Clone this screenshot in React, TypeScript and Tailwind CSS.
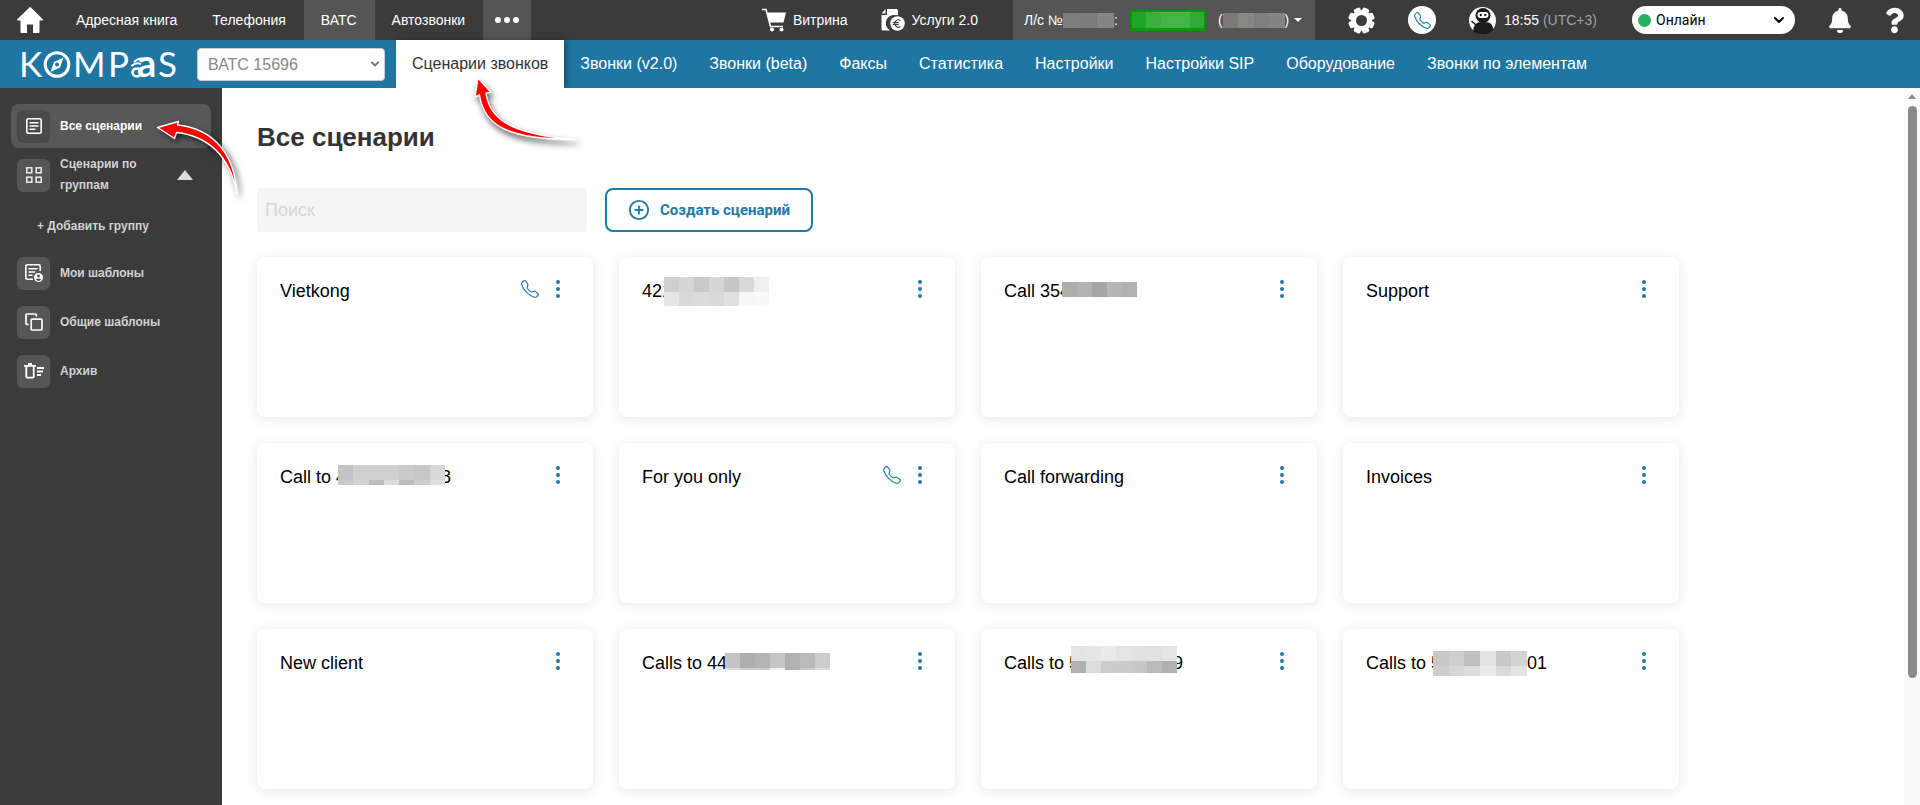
import { useState } from "react";
import type { ReactNode } from "react";
import { BsTelephone } from "react-icons/bs";
import { FaBell, FaQuestion } from "react-icons/fa";
import { ChevronDown, CirclePlus } from "lucide-react";

type MosaicRow = { height: number; colors: string[] }

type Scenario = {
    title: string;
    suffix?: string;
    phone?: boolean;
    mosaic?: MosaicRow[];
    mosaicClass?: string;
    suffixClass?: string;
}

const topLinks = ["Адресная книга", "Телефония", "ВАТС", "Автозвонки"]

const tabs = [
    "Сценарии звонков",
    "Звонки (v2.0)",
    "Звонки (beta)",
    "Факсы",
    "Статистика",
    "Настройки",
    "Настройки SIP",
    "Оборудование",
    "Звонки по элементам",
]

const scenarios: Scenario[] = [
    { title: "Vietkong", phone: true },
    {
        title: "421",
        mosaicClass: "w-[105px] -ml-2",
        mosaic: [
            { height: 15, colors: ["#cfcfcf", "#d6d6d6", "#c9c9c9", "#d6d6d6", "#c6c6c6", "#d9d9d9", "#f0f0f0"] },
            { height: 14, colors: ["#e6e6e6", "#d9d9d9", "#dbdbdb", "#d9d9d9", "#e0e0e0", "#f7f7f7", "#f9f9f9"] },
        ],
    },
    {
        title: "Call 354",
        mosaicClass: "w-[75px] -ml-2 mb-1",
        mosaic: [{ height: 15, colors: ["#adadad", "#b3b3b3", "#a6a6a6", "#b6b6b6", "#b0b0b0"] }],
    },
    { title: "Support" },
    {
        title: "Call to 4",
        suffix: "8",
        mosaicClass: "w-[107px] -ml-2 mb-1",
        suffixClass: "-ml-1",
        mosaic: [
            { height: 15, colors: ["#c3c3c3", "#d0d0d0", "#d0d0d0", "#d0d0d0", "#cacaca", "#c7c7c7", "#d8d8d8"] },
            { height: 5, colors: ["#cacaca", "#d3d3d3", "#bdbdbd", "#dcdcdc", "#bdbdbd", "#cdcdcd", "#dfdfdf"] },
        ],
    },
    { title: "For you only", phone: true },
    { title: "Call forwarding" },
    { title: "Invoices" },
    { title: "New client" },
    {
        title: "Calls to 44",
        mosaicClass: "w-[105px] -ml-[2px] mb-1",
        mosaic: [
            { height: 15, colors: ["#c4c4c4", "#aeaeae", "#b4b4b4", "#c6c6c6", "#b0b0b0", "#bababa", "#cdcdcd"] },
            { height: 2, colors: ["#dddddd", "#cccccc", "#cccccc", "#f3f3f3", "#b0b0b0", "#cccccc", "#dddddd"] },
        ],
    },
    {
        title: "Calls to 5",
        suffix: "9",
        mosaicClass: "w-[106px] -ml-2 mb-2",
        suffixClass: "-ml-1",
        mosaic: [
            { height: 15, colors: ["#e4e4e4", "#e6e6e6", "#eaeaea", "#e4e4e4", "#e2e2e2", "#e1e1e1", "#e5e5e5"] },
            { height: 12, colors: ["#b0b0b0", "#dcdcdc", "#cccccc", "#cbcbcb", "#c6c6c6", "#bababa", "#b0b0b0"] },
        ],
    },
    {
        title: "Calls to 5",
        suffix: "01",
        mosaicClass: "w-[94px] -ml-2",
        mosaic: [
            { height: 15, colors: ["#c8c8c8", "#cecece", "#c0c0c0", "#e3e3e3", "#c8c8c8", "#d3d3d3"] },
            { height: 10, colors: ["#cecece", "#d6d6d6", "#dedede", "#ececec", "#dadada", "#e3e3e3"] },
        ],
    },
]

const Mosaic = ({ rows, className = "" }: { rows: MosaicRow[]; className?: string }) => (
    <span className={`relative z-10 inline-flex flex-col shrink-0 ${className}`} aria-hidden="true">
        {rows.map((row, i) => (
            <span key={i} className="flex">
                {row.colors.map((color, j) => (
                    <span key={j} className="flex-1" style={{ background: color, height: row.height }} />
                ))}
            </span>
        ))}
    </span>
)

const HomeIcon = () => (
    <svg className="w-[26px] h-[26px]" viewBox="0 0 26 26" fill="#fff">
        <path d="M13 0 L0 12.500 Q-.3 13.500 1 13.500 H3.500 V25 Q3.500 26 4.500 26 H10 V17.500 H16 V26 H21.500 Q22.500 26 22.500 25 V13.500 H25 Q26.300 13.500 26 12.500 L14 .6 Q13 -.2 12 .6 Z" />
    </svg>
)

const CartIcon = () => (
    <svg className="w-6 h-6" viewBox="0 0 24 24" fill="none">
        <path d="M0 1.500 H4 L8.500 18.500 H21" stroke="#fff" strokeWidth="1.500" />
        <path d="M5 4.500 H24 L21.500 14.500 H7.500 Z" fill="#fff" />
        <circle cx="10" cy="21.500" r="2" fill="#fff" />
        <circle cx="19.500" cy="21.500" r="2" fill="#fff" />
    </svg>
)

const BillIcon = () => (
    <svg className="w-6 h-6" viewBox="0 0 24 24">
        <path d="M6 1 H15.500 Q17 1 17 2.500 V8 A8 8 0 0 0 9 22.500 H2 Q.5 22.500 .5 21 V7 H6 Z" fill="#fff" />
        <path d="M4.500 1 V5.500 H.5 Z" fill="#fff" />
        <circle cx="16.500" cy="15.500" r="8.300" fill="#3b3b3b" />
        <circle cx="16.500" cy="15.500" r="7.300" fill="#fff" />
        <path d="M19.500 12.500 A3.600 3.600 0 1 0 19.500 18.500 M11.800 14.600 h6 M11.800 16.500 h6" fill="none" stroke="#3b3b3b" strokeWidth="1.100" />
    </svg>
)

const GearIcon = () => (
    <svg className="w-[27px] h-[27px]" viewBox="-13.500 -13.500 27 27">
        {[0, 45, 90, 135].map((angle) => (
            <rect key={angle} x="-3.500" y="-13.200" width="7" height="26.400" rx="2" fill="#fff" transform={`rotate(${angle + 22.5})`} />
        ))}
        <circle r="10.300" fill="#fff" />
        <circle r="5.500" fill="#3b3b3b" />
    </svg>
)

const NinjaIcon = () => (
    <svg className="w-[27px] h-[27px]" viewBox="0 0 27 27">
        <circle cx="13.500" cy="13.500" r="13.500" fill="#fff" />
        <circle cx="14" cy="8.500" r="7.500" fill="#1b1b1b" />
        <rect x="8.500" y="5" width="11" height="6" rx="3" fill="#fff" />
        <circle cx="11.800" cy="8" r="1.200" fill="#1b1b1b" />
        <circle cx="16.200" cy="8" r="1.200" fill="#1b1b1b" />
        <path d="M2.500 14 L8 19 M10 16 H18.500 Q23 17 23.500 22.500 A13.500 13.500 0 0 1 5 24 Q5 18 10 16 Z" fill="#1b1b1b" stroke="#1b1b1b" strokeWidth="1.500" />
    </svg>
)

const Logo = () => (
    <svg className="w-[162px] h-12" viewBox="-1 0 162 48" role="img" aria-label="KOMPaS" fontFamily="Lato, sans-serif" fill="#fff">
        <text x="-1" y="37" fontSize="35">K</text>
        <circle cx="37" cy="24.500" r="11.800" fill="none" stroke="#fff" strokeWidth="3" />
        <path d="M43.500 17.500 L40 27.500 L30.500 32 L34 22 Z M37 22.600 a2 2 0 1 0 .1 0 Z" fillRule="evenodd" />
        <text x="53" y="37" fontSize="35">M</text>
        <text x="88" y="37" fontSize="35">P</text>
        <path d="M114 22 Q119 17 125 19 M111.500 26 Q116 22 121 24" fill="none" stroke="#fff" strokeWidth="2" />
        <path d="M122 29 Q112 27 112.500 33 Q114 38 120 35.500" fill="none" stroke="#fff" strokeWidth="2.500" />
        <text x="117" y="37" fontSize="38" fontWeight="700">a</text>
        <text x="138" y="37" fontSize="35">S</text>
    </svg>
)

const ListIcon = () => (
    <svg className="w-4 h-4" viewBox="0 0 16 16" fill="none" stroke="#fff" strokeWidth="1.600">
        <rect x=".8" y=".8" width="14.400" height="14.400" rx="1.500" />
        <path d="M3.500 4.700 H12.500 M3.500 8 H12.500 M3.500 11.300 H9.500" />
    </svg>
)

const GridIcon = () => (
    <svg className="w-4 h-4" viewBox="0 0 16 16" fill="none" stroke="#e5e5e5" strokeWidth="1.600">
        <rect x=".8" y=".8" width="5" height="5" />
        <rect x="10.200" y=".8" width="5" height="5" />
        <rect x=".8" y="10.200" width="5" height="5" />
        <rect x="10.200" y="10.200" width="5" height="5" />
    </svg>
)

const MyTemplatesIcon = () => (
    <svg className="w-[18px] h-[18px]" viewBox="0 0 18 18" fill="none" stroke="#fff" strokeWidth="1.600">
        <path d="M8 15.200 H2.300 Q.8 15.200 .8 13.700 V2.300 Q.8 .8 2.300 .8 H13.700 Q15.200 .8 15.200 2.300 V7" />
        <path d="M3.500 4.700 H12.500 M3.500 8 H10 M3.500 11.300 H7.500" />
        <circle cx="13.500" cy="13.500" r="4.500" fill="#fff" stroke="none" />
        <circle cx="13.500" cy="12" r="1.400" fill="#4f4f4f" stroke="none" />
        <path d="M10.800 15.800 Q13.500 13.400 16.200 15.800 Q13.500 18 10.800 15.800 Z" fill="#4f4f4f" stroke="none" />
    </svg>
)

const SharedIcon = () => (
    <svg className="w-[18px] h-[18px]" viewBox="0 0 18 18" fill="none" stroke="#fff" strokeWidth="1.700">
        <rect x="6.200" y="6.200" width="10.800" height="10.800" rx="1" />
        <path d="M3.500 11.300 H2 Q1 11.300 1 10.300 V2 Q1 1 2 1 H10.300 Q11.300 1 11.300 2 V3.500" />
    </svg>
)

const ArchiveIcon = () => (
    <svg className="w-5 h-4" viewBox="0 0 20 16" fill="none" stroke="#fff" strokeWidth="1.800">
        <path d="M0 2.800 H12 M4 1 H8 M2.300 3 V13.500 Q2.300 14.600 3.300 14.600 H8.700 Q9.700 14.600 9.700 13.500 V3 M13 5 H20 M13 8.500 H19 M13 12 H17" />
    </svg>
)

const SideItem = ({ icon, label, active, children }: { icon: ReactNode; label: string; active?: boolean; children?: ReactNode }) => (
    <a
        href="#"
        className={`flex items-center mx-[11px] pl-[6px] pr-[18px] h-11 rounded-lg text-xs leading-[21px] font-bold ${active ? "bg-[#585858] text-white" : "text-[#d2d2d2]"}`}
    >
        <span className={`flex items-center justify-center shrink-0 w-[33px] h-[33px] rounded-md mr-[10px] ${active ? "bg-[#4a4a4a]" : "bg-[#565656]"}`}>{icon}</span>
        <span className="w-[106px]">{label}</span>
        {children}
    </a>
)

const ScenarioCard = ({ scenario }: { scenario: Scenario }) => (
    <article className="flex items-start justify-between h-40 pl-[23px] pr-[31px] pt-5 rounded-lg bg-white shadow-[0_2px_12px_rgba(70,80,90,0.13)]">
        <h2 className="flex items-center h-7 text-lg text-black whitespace-nowrap">
            <span>{scenario.title}</span>
            {scenario.mosaic && <Mosaic rows={scenario.mosaic} className={scenario.mosaicClass} />}
            {scenario.suffix && <span className={scenario.suffixClass}>{scenario.suffix}</span>}
        </h2>
        <div className="flex items-center gap-[15px] h-6">
            {scenario.phone && <BsTelephone className="w-[18px] h-[18px] text-[#2a7fab]" />}
            <button aria-label="Меню" className="flex flex-col items-center gap-[3px] w-2">
                <span className="w-1 h-1 rounded-full bg-[#2179a7]" />
                <span className="w-1 h-1 rounded-full bg-[#2179a7]" />
                <span className="w-1 h-1 rounded-full bg-[#2179a7]" />
            </button>
        </div>
    </article>
)

const App = () => {
    const [search, setSearch] = useState<string>("")
    return (
        <div className="relative flex flex-col min-h-screen bg-white font-['Liberation_Sans',Arial,sans-serif]">
            <header className="overflow-hidden">
                <div className="flex items-center h-10 bg-[#3b3b3b] text-white text-sm whitespace-nowrap">
                    <a href="#" aria-label="Главная" className="pl-[17px] pr-4"><HomeIcon /></a>
                    <nav className="flex h-full">
                        {topLinks.map((link) => (
                            <a key={link} href="#" className={`flex items-center pl-[17px] pr-[18px] ${link === "ВАТС" ? "bg-[#555]" : ""}`}>{link}</a>
                        ))}
                        <button aria-label="Ещё" className="flex items-center justify-center gap-[3px] w-12 bg-[#555]">
                            <span className="w-[6px] h-[6px] rounded-full bg-white" />
                            <span className="w-[6px] h-[6px] rounded-full bg-white" />
                            <span className="w-[6px] h-[6px] rounded-full bg-white" />
                        </button>
                    </nav>
                    <div className="flex items-center gap-[33px] h-full ml-auto pr-4">
                        <a href="#" className="flex items-center gap-[7px]"><CartIcon />Витрина</a>
                        <a href="#" className="flex items-center gap-[7px] pr-[2px]"><BillIcon />Услуги 2.0</a>
                        <button className="flex items-center w-[302px] h-full pl-[11px] bg-[#555]">
                            <span>Л/с №</span>
                            <Mosaic className="w-[51px]" rows={[{ height: 15, colors: ["#7d7d80", "#7b7b7e", "#858584"] }]} />
                            <span>:</span>
                            <span className="flex items-center justify-center ml-3 w-[76px] h-[21px] rounded-[2px] bg-[#009a00]">
                                <Mosaic className="w-[72px]" rows={[{ height: 16, colors: ["#20a524", "#3bb03f", "#43b447", "#43b447", "#2fab33"] }]} />
                            </span>
                            <span className="ml-3">(</span>
                            <Mosaic className="w-[62px]" rows={[{ height: 15, colors: ["#79797c", "#868683", "#7e7e80", "#848484"] }]} />
                            <span>)</span>
                            <span className="ml-[5px] border-x-4 border-t-4 border-x-transparent border-t-white" />
                        </button>
                        <button aria-label="Настройки"><GearIcon /></button>
                        <button aria-label="Позвонить" className="flex items-center justify-center w-7 h-7 rounded-full bg-white">
                            <BsTelephone className="w-[17px] h-[17px] text-[#2a7fab]" />
                        </button>
                        <div className="flex items-center gap-2 pr-[2px]">
                            <NinjaIcon />
                            <span>18:55 <span className="text-[#a0a0a0]">(UTC+3)</span></span>
                        </div>
                        <div className="relative flex items-center">
                            <span className="absolute left-[6px] w-[13px] h-[13px] rounded-full bg-[#27ae60]" />
                            <select aria-label="Статус" className="appearance-none w-[163px] h-7 pl-6 rounded-full bg-white text-black font-[Roboto,sans-serif]">
                                <option>Онлайн</option>
                            </select>
                            <ChevronDown className="absolute right-2 w-4 h-4 text-black pointer-events-none" strokeWidth={3} />
                        </div>
                        <button aria-label="Уведомления" className="flex justify-center w-6"><FaBell className="w-6 h-[25px]" /></button>
                        <button aria-label="Помощь" className="flex justify-center w-[19px]"><FaQuestion className="w-[19px] h-[27px]" /></button>
                    </div>
                </div>
                <div className="flex items-center h-12 bg-[#1f76a2] whitespace-nowrap">
                    <a href="#" className="pl-[19px] pr-4"><Logo /></a>
                    <div className="relative flex items-center mr-[11px]">
                        <select aria-label="ВАТС" className="appearance-none w-[188px] h-[33px] pl-[10px] pt-[2px] rounded border border-[#ccc] bg-white text-base text-[#888]">
                            <option>ВАТС 15696</option>
                        </select>
                        <ChevronDown className="absolute right-1 w-3 h-3 text-[#777] pointer-events-none" strokeWidth={4} />
                    </div>
                    <nav className="flex h-full">
                        {tabs.map((tab, i) => (
                            <a
                                key={tab}
                                href="#"
                                className={`flex items-center px-4 ${i === 0 ? "bg-white text-[#333] shadow-[3px_0_6px_rgba(0,0,0,0.35)]" : "text-white"}`}
                            >
                                {tab}
                            </a>
                        ))}
                    </nav>
                </div>
            </header>

            <div className="flex flex-1">
                <aside className="w-[222px] shrink-0 bg-[#3b3b3b] pt-4">
                    <SideItem icon={<ListIcon />} label="Все сценарии" active />
                    <div className="mt-[5px]">
                        <SideItem icon={<GridIcon />} label="Сценарии по группам">
                            <span className="ml-auto border-x-8 border-b-[10px] border-x-transparent border-b-[#ddd]" />
                        </SideItem>
                    </div>
                    <button className="block mt-[19px] ml-[37px] text-xs leading-[21px] font-bold text-[#d2d2d2]">+ Добавить группу</button>
                    <div className="flex flex-col gap-[5px] mt-[14px]">
                        <SideItem icon={<MyTemplatesIcon />} label="Мои шаблоны" />
                        <SideItem icon={<SharedIcon />} label="Общие шаблоны" />
                        <SideItem icon={<ArchiveIcon />} label="Архив" />
                    </div>
                </aside>

                <main className="flex-1 px-[35px] pt-[33px] pb-3">
                    <h1 className="text-[26px] leading-8 font-bold text-[#333]">Все сценарии</h1>
                    <div className="flex gap-[18px] mt-[35px]">
                        <input
                            type="text"
                            aria-label="Поиск"
                            value={search}
                            placeholder="Поиск"
                            onChange={(e) => { setSearch(e.target.value) }}
                            className="w-[330px] h-11 px-2 rounded bg-[#f5f5f5] text-lg placeholder:text-[#d5d5d5] outline-none"
                        />
                        <button className="flex items-center justify-center gap-[10px] w-[208px] h-11 rounded-lg border-2 border-[#2179a7] text-[#2179a7] text-[15px] font-bold font-[Roboto,sans-serif]">
                            <CirclePlus className="w-[22px] h-[22px]" />
                            Создать сценарий
                        </button>
                    </div>
                    <div className="grid grid-cols-[repeat(auto-fill,336px)] gap-[26px] mt-[25px]">
                        {scenarios.map((scenario, i) => (
                            <ScenarioCard key={i} scenario={scenario} />
                        ))}
                    </div>
                </main>

                <div className="flex flex-col items-center w-4 shrink-0 pt-[6px] bg-[#fafafa]" aria-hidden="true">
                    <span className="border-x-4 border-b-[5px] border-x-transparent border-b-[#8a8a8a]" />
                    <span className="mt-[7px] w-[9px] h-[572px] rounded-full bg-[#8a8a8a]" />
                </div>
            </div>

            {/* hint arrows */}
            <svg className="absolute left-[465px] top-[70px] w-[125px] h-[85px] pointer-events-none drop-shadow-[2px_4px_3px_rgba(0,0,0,0.6)]" viewBox="465 70 125 85">
                <path d="M478 78 L491 92.500 L486 93 C489 116 505 134 576 139.500 C510 139.500 484 127 479.500 95 L475 97 Z" fill="#f00" stroke="#fff" strokeWidth="1.400" strokeLinejoin="round" />
            </svg>
            <svg className="absolute left-[150px] top-[112px] w-[100px] h-[90px] pointer-events-none drop-shadow-[3px_3px_3px_rgba(0,0,0,0.6)]" viewBox="150 112 100 90">
                <path d="M157.500 127.500 L178.500 121.500 L177.500 125 C208 128 234 148 237 193.500 C230 156 208 136 176.500 132.500 L174.500 138.500 Z" fill="#f00" stroke="#fff" strokeWidth="1.400" strokeLinejoin="round" />
            </svg>
        </div>
    )
}

export default App
